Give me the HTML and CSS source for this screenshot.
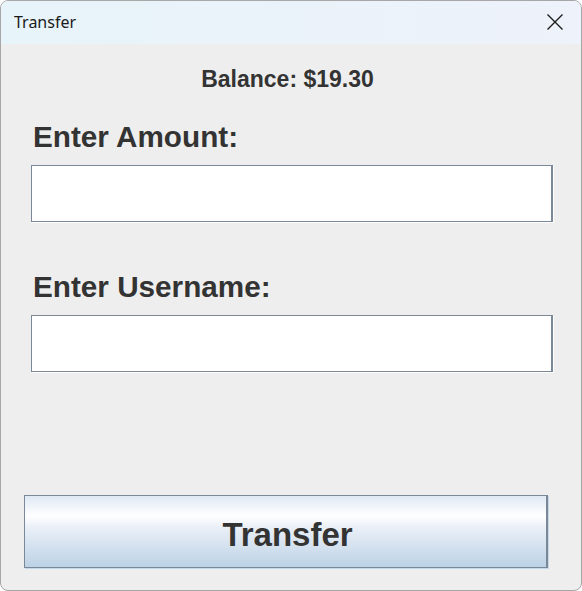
FILE: index.html
```html
<!DOCTYPE html>
<html>
<head>
<meta charset="utf-8">
<link rel="stylesheet" href="styles.css">
</head>
<body>
<div class="window">
  <div class="titlebar">
    <span class="title">Transfer</span>
    <svg class="close" width="18" height="18" viewBox="0 0 18 18"><path d="M1.5 1.5 L16.5 16.5 M16.5 1.5 L1.5 16.5" stroke="#1c1c1c" stroke-width="1.4" fill="none"/></svg>
  </div>
  <div class="content">
    <div class="balance">Balance: $19.30</div>
    <label class="label first">Enter Amount:</label>
    <div class="field"></div>
    <label class="label second">Enter Username:</label>
    <div class="field"></div>
    <button class="btn">Transfer</button>
  </div>
</div>
</body>
</html>
```
FILE: styles.css
```css
html, body {
  margin: 0;
  padding: 0;
  background: #ffffff;
}
.window {
  box-sizing: border-box;
  width: 582px;
  height: 591px;
  border: 1px solid #a7a7a7;
  border-radius: 8px;
  overflow: hidden;
  display: flex;
  flex-direction: column;
  background: #eeeeee;
}
.titlebar {
  height: 43px;
  flex: none;
  display: flex;
  align-items: center;
  justify-content: space-between;
  background: linear-gradient(to right, #e7f4f9, #eef2fa);
  padding: 0 17px 0 13px;
}
.title {
  font-family: "Noto Sans", sans-serif;
  font-size: 16px;
  color: #1a1a1a;
  margin-top: -2px;
}
.close {
  display: block;
  margin-top: -2px;
}
.content {
  flex: 1;
  display: flex;
  flex-direction: column;
  align-items: flex-start;
  font-family: "Liberation Sans", Arial, sans-serif;
  color: #333333;
}
.balance {
  align-self: stretch;
  text-align: center;
  font-weight: bold;
  font-size: 23px;
  line-height: 26px;
  margin-top: 22px;
  padding-right: 7px;
}
.label {
  font-weight: bold;
  font-size: 29.7px;
  line-height: 34px;
  margin-left: 32px;
}
.label.first {
  margin-top: 28px;
}
.label.second {
  margin-top: 48px;
}
.field {
  box-sizing: border-box;
  width: 522px;
  height: 57px;
  margin-left: 30px;
  margin-top: 11px;
  background: #ffffff;
  border-style: solid;
  border-color: #7b8898;
  border-width: 1px 2px 1px 1px;
  box-shadow: 1px 1px 0 #ffffff;
}
.btn {
  box-sizing: border-box;
  margin-top: auto;
  margin-bottom: 22px;
  margin-left: 23px;
  width: 524px;
  height: 73px;
  border-style: solid;
  border-color: #7b8898;
  border-width: 1px 2px 1px 1px;
  box-shadow: 1px 1px 0 #c6d9ea;
  background: linear-gradient(to bottom, #dfe9f4 0%, #ffffff 28%, #e9eff7 45%, #bdd2e6 100%);
  font-family: "Liberation Sans", Arial, sans-serif;
  font-weight: bold;
  font-size: 33px;
  color: #333333;
  padding: 6px 0 0 4px;
}
```
